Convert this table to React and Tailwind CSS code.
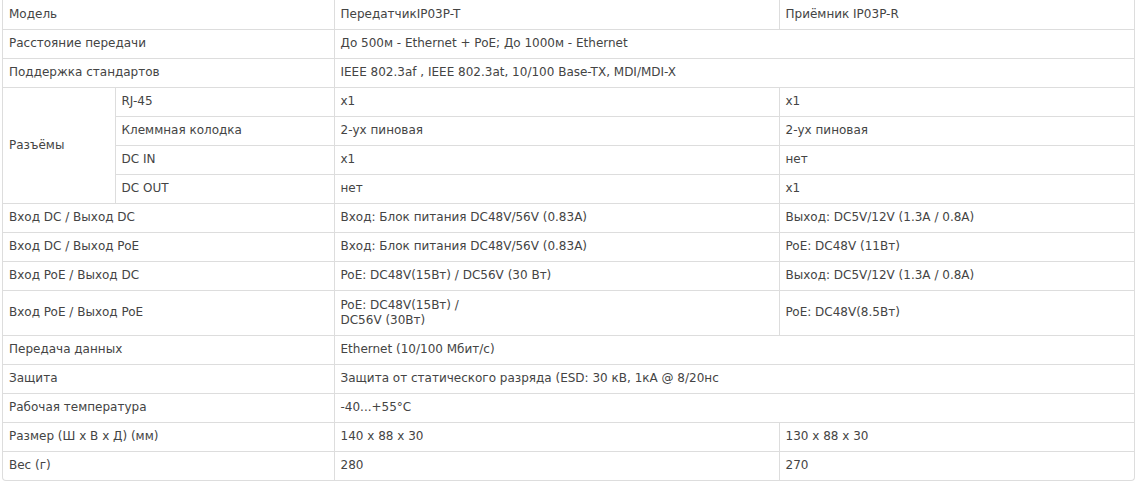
import React from 'react';

const cell = 'border-r border-b border-[#dddddd] px-[6px] align-middle';

// rows: [label, col2, col3] ; col3 === null -> col2 spans
const TOP = [
  ['Модель', 'ПередатчикIP03P-T', 'Приёмник IP03P-R'],
  ['Расстояние передачи', 'До 500м - Ethernet + PoE; До 1000м - Ethernet', null],
  ['Поддержка стандартов', 'IEEE 802.3af , IEEE 802.3at, 10/100 Base-TX, MDI/MDI-X', null],
];

const PORTS = [
  ['RJ-45', 'x1', 'x1'],
  ['Клеммная колодка', '2-ух пиновая', '2-ух пиновая'],
  ['DC IN', 'x1', 'нет'],
  ['DC OUT', 'нет', 'x1'],
];

const BOTTOM = [
  ['Вход DC / Выход DC', 'Вход: Блок питания DC48V/56V (0.83A)', 'Выход: DC5V/12V (1.3A / 0.8A)'],
  ['Вход DC / Выход PoE', 'Вход: Блок питания DC48V/56V (0.83A)', 'PoE: DC48V (11Вт)'],
  ['Вход PoE / Выход DC', 'PoE: DC48V(15Вт) / DC56V (30 Вт)', 'Выход: DC5V/12V (1.3A / 0.8A)'],
  ['Вход PoE / Выход PoE', <>PoE: DC48V(15Вт) /<br />DC56V (30Вт)</>, 'PoE: DC48V(8.5Вт)', true],
  ['Передача данных', 'Ethernet (10/100 Мбит/с)', null],
  ['Защита', 'Защита от статического разряда (ESD: 30 кВ, 1кА @ 8/20нс', null],
  ['Рабочая температура', '-40...+55°C', null],
  ['Размер (Ш x В x Д) (мм)', '140 x 88 x 30', '130 x 88 x 30'],
  ['Вес (г)', '280', '270'],
];

function Row({ r, last }) {
  const [label, a, b, tall] = r;
  const h = tall ? 'h-[45px]' : 'h-[29px]';
  const bb = last ? ' border-b-0' : '';
  return (
    <tr className={h}>
      <td colSpan={2} className={cell + bb}>{label}</td>
      {b === null ? (
        <td colSpan={2} className={cell + ' border-r-0' + bb}>{a}</td>
      ) : (
        <>
          <td className={cell + bb}>{a}</td>
          <td className={cell + ' border-r-0' + bb}>{b}</td>
        </>
      )}
    </tr>
  );
}

export default function App() {
  return (
    <div className="bg-white w-[1140px] h-[486px] pl-[2px]" style={{ fontFamily: '"DejaVu Sans", Verdana, sans-serif' }}>
      <div className="w-[1133px] border border-t-0 border-[#dddddd] rounded-b-[4px] overflow-hidden">
        <table className="w-full table-fixed border-collapse text-[12px] leading-[15px] text-[#444444]">
          <colgroup>
            <col className="w-[112px]" />
            <col className="w-[219px]" />
            <col className="w-[445px]" />
            <col />
          </colgroup>
          <tbody>
            {TOP.map((r, i) => <Row key={i} r={r} />)}
            {PORTS.map((p, i) => (
              <tr key={'p' + i} className="h-[29px]">
                {i === 0 && <td rowSpan={4} className={cell}>Разъёмы</td>}
                <td className={cell}>{p[0]}</td>
                <td className={cell}>{p[1]}</td>
                <td className={cell + ' border-r-0'}>{p[2]}</td>
              </tr>
            ))}
            {BOTTOM.map((r, i) => <Row key={'b' + i} r={r} last={i === BOTTOM.length - 1} />)}
          </tbody>
        </table>
      </div>
    </div>
  );
}
